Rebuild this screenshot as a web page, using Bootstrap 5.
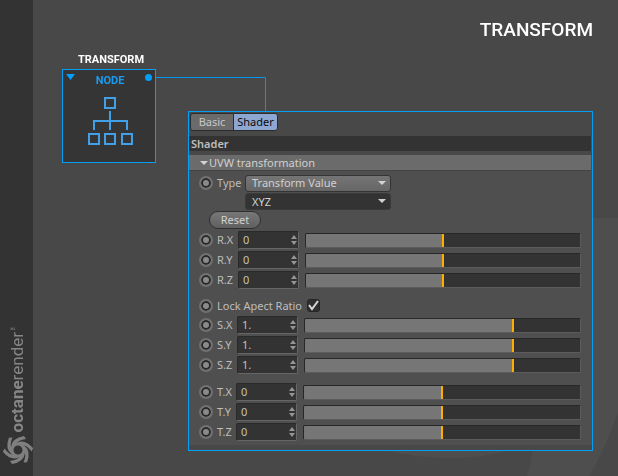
<!DOCTYPE html>
<html lang="en">
<head>
<meta charset="utf-8">
<meta name="viewport" content="width=device-width, initial-scale=1">
<title>Transform</title>
<link href="https://cdn.jsdelivr.net/npm/bootstrap@5.3.0/dist/css/bootstrap.min.css" rel="stylesheet">
<style>
body{background:#484848;font-family:"Noto Sans","Open Sans",sans-serif;font-size:11px;line-height:16px;color:#bdbdbd}
.brand-rail{width:33px;background:#333;color:#868686;padding-bottom:11px}
.brand-name{writing-mode:vertical-rl;transform:rotate(180deg);font:17px/20px Roboto,sans-serif;margin-bottom:3px}
.brand-name b{font-weight:700}
.brand-name span{font-size:10px;line-height:8px;vertical-align:4px}
.stage{padding:18px 25px 0 29px}
.backdrop{right:0;bottom:0;z-index:-1}
.page-title{font:500 19px/24px Roboto,sans-serif;color:#fff}
.graph{padding-top:11px}
.node-col{width:94px;margin-right:32px}
.node-title{font:700 11px/14px Roboto,sans-serif;color:#fff;padding-bottom:2px}
.node-box{border:1px solid #00a0fa;background:#353535;height:94px}
.node-head{height:18px;padding:0 3px;font:700 11px/18px Roboto,sans-serif;color:#1b9bf0}
.wire{left:94px;top:35px}
.panel{border:1px solid #00a0fa;margin-top:58px;background:#4f4f4f;min-width:0}
.tabs{background:#484848;padding:1px 1px 5px}
.tab{height:18px;padding:0;border:1px solid #2b2b2b;background:#6b6b6b;color:#c8c8c8;border-radius:3px 0 0 3px;line-height:16px;width:44px}
.tab.on{background:#8ea6d2;color:#0b0b0b;border-radius:0 3px 3px 0;width:45px;margin-left:-1px}
.sect{background:#333;height:15px;line-height:15px;font-weight:600;padding-left:2px;margin-right:1px}
.strip{background:#484848;height:4px}
.strip.foot{height:5px}
.group-head{background:#6b6b6b;height:16px;line-height:15px;border-bottom:1px solid #444;margin-right:1px;padding-left:11px;gap:1px;color:#d0d0d0}
.fields{padding:2px 11px 3px 10px}
.field-row{height:20px}
.field-row label{padding-left:4px;white-space:nowrap;flex:none}
.order-row{height:18px;padding-left:46px}
.key{width:14px;height:14px;flex:none;border:2px solid #707070;border-radius:50%;background:#8a8a8a;box-shadow:inset 0 0 0 2px #292929;padding:0}
.type-l{width:32px}
.pick{position:relative;width:146px}
.pick select{appearance:none;width:100%;height:17px;border:1px solid #343434;border-radius:3px;padding:0 6px;font:inherit;line-height:14px;color:#d0d0d0;background:linear-gradient(#757575,#666);display:block}
.pick.dark select{background:#333;border-color:#3a3a3a}
.pick svg{position:absolute;right:5px;top:6px;pointer-events:none}
.reset{display:block;width:52px;height:18px;border:1px solid #303030;border-radius:9px;background:linear-gradient(#777,#606060);color:#d0d0d0;padding:0;line-height:16px;margin:0 0 1px 10px}
.num{position:relative;width:61px;flex:none}
.num input{width:100%;height:18px;display:block;border:1px solid;border-color:#292929 #666 #666 #292929;border-radius:2px;background:#333;color:#c4c4b4;font:inherit;padding:0 4px 1px}
.num svg{position:absolute;right:2px;top:4px}
.slide{appearance:none;flex:1 1 0;min-width:0;height:15px;margin:0 0 0 6px;border:1px solid;border-color:#282828 #5c5c5c #5c5c5c #282828;border-radius:2px;background:linear-gradient(90deg,#767676 50%,#333 50%)}
.slide.high{background:linear-gradient(90deg,#767676 76%,#333 76%)}
.slide::-webkit-slider-thumb{appearance:none;width:2px;height:13px;background:#ffae00}
.rot label{width:25px}
.scl label{width:24px}
.trn label{width:23px}
.lock-row{height:19px;margin-top:6px}
.trn{margin-top:7px}
.lock-box{position:relative;margin-left:5px;width:13px;height:13px}
.lock-box input{appearance:none;display:block;width:13px;height:13px;margin:0;border:1px solid #252525;border-radius:3px;background:#303030}
.lock-box svg{position:absolute;left:0;top:0;pointer-events:none}
</style>
<script src="https://cdn.jsdelivr.net/npm/bootstrap@5.3.0/dist/js/bootstrap.bundle.min.js"></script>
</head>
<body>
<svg class="backdrop position-fixed" width="240" height="260" viewBox="378 216 240 260" fill="#4e4e4e" aria-hidden="true">
<path d="M593 218H618V412Q606 448 589 476H527Q532 464 532 440H593Z"/>
<path d="M378 449Q455 467 515 449V440H378Z"/>
</svg>
<svg width="0" height="0" class="position-absolute" aria-hidden="true">
<symbol id="spin" viewBox="0 0 6 10"><path d="M0 4L3 0L6 4ZM0 6H6L3 10Z" fill="#959595"/></symbol>
<symbol id="caret" viewBox="0 0 8 4"><path d="M0 0H8L4 4Z" fill="#d2d2d2"/></symbol>
</svg>
<div class="d-flex min-vh-100">
<aside class="brand-rail d-flex flex-column justify-content-end align-items-center flex-shrink-0">
<div class="brand-name"><b>octane</b>render<span>™</span></div>
<svg width="32" height="30" viewBox="-17 -15 32 30" fill="#7f7f7f" aria-hidden="true">
<circle r="6" fill="none" stroke="#7f7f7f" stroke-width="3"/>
<path id="blade" d="M-7 -3Q-6 -12 6 -14L8 -11Q0 -10 -2 -6Z"/>
<use href="#blade" transform="rotate(60)"/><use href="#blade" transform="rotate(120)"/><use href="#blade" transform="rotate(180)"/><use href="#blade" transform="rotate(240)"/><use href="#blade" transform="rotate(300)"/>
</svg>
</aside>
<main class="stage flex-grow-1">
<h1 class="page-title text-end m-0">TRANSFORM</h1>
<div class="graph d-flex align-items-start position-relative">
<svg class="wire position-absolute" width="112" height="34" fill="none" aria-hidden="true"><path d="M0 .5H109.500V34" stroke="#0098ee"/></svg>
<section class="node-col flex-shrink-0">
<h2 class="node-title text-center m-0 ps-1">TRANSFORM</h2>
<div class="node-box">
<div class="node-head d-flex justify-content-between align-items-center">
<svg class="mb-1" width="9" height="7"><path d="M0 0H9L4.500 6Z" fill="#00a0fa"/></svg><span class="pt-1">NODE</span>
<svg class="mb-1" width="7" height="7"><circle cx="3.500" cy="3.500" r="3.500" fill="#00a0fa"/></svg>
</div>
<svg class="d-block mx-auto mt-2" width="48" height="50" viewBox="0 0 48 50" fill="none" stroke="#42a0e8" stroke-width="2"><path d="M20 2h10v10H20zM4 38h10v10H4zM20 38h10v10H20zM37 38h10v10H37zM25 15v19M9 34V25H42V34"/></svg>
</div>
</section>
<section class="panel flex-grow-1">
<div class="tabs d-flex"><button type="button" class="tab">Basic</button><button type="button" class="tab on">Shader</button></div>
<div class="sect">Shader</div>
<div class="strip"></div>
<div class="group-head d-flex align-items-center"><svg width="8" height="4"><use href="#caret"/></svg>UVW transformation</div>
<form class="fields">
<div class="field-row d-flex align-items-center"><button type="button" class="key" aria-label="Animate type"></button><label class="type-l" for="type">Type</label><div class="pick"><select id="type"><option>Transform Value</option></select><svg width="8" height="4"><use href="#caret"/></svg></div></div>
<div class="order-row"><div class="pick dark"><select aria-label="Order"><option>XYZ</option></select><svg width="8" height="4"><use href="#caret"/></svg></div></div>
<button type="button" class="reset">Reset</button>
<div class="rot">
<div class="field-row d-flex align-items-center"><button type="button" class="key" aria-label="Animate R.X"></button><label for="rx">R.X</label><div class="num"><input id="rx" type="text" value="0"><svg width="6" height="10"><use href="#spin"/></svg></div><input class="slide" type="range" value="50" aria-label="R.X slider"></div>
<div class="field-row d-flex align-items-center"><button type="button" class="key" aria-label="Animate R.Y"></button><label for="ry">R.Y</label><div class="num"><input id="ry" type="text" value="0"><svg width="6" height="10"><use href="#spin"/></svg></div><input class="slide" type="range" value="50" aria-label="R.Y slider"></div>
<div class="field-row d-flex align-items-center"><button type="button" class="key" aria-label="Animate R.Z"></button><label for="rz">R.Z</label><div class="num"><input id="rz" type="text" value="0"><svg width="6" height="10"><use href="#spin"/></svg></div><input class="slide" type="range" value="50" aria-label="R.Z slider"></div>
</div>
<div class="field-row lock-row d-flex align-items-center"><button type="button" class="key" aria-label="Animate lock"></button><label for="lock">Lock Apect Ratio</label><div class="lock-box"><input id="lock" type="checkbox" checked><svg width="13" height="13" fill="none" stroke="#d8d8d8" stroke-width="2"><path d="M2 6L5 10L11 2"/></svg></div></div>
<div class="scl">
<div class="field-row d-flex align-items-center"><button type="button" class="key" aria-label="Animate S.X"></button><label for="sx">S.X</label><div class="num"><input id="sx" type="text" value="1."><svg width="6" height="10"><use href="#spin"/></svg></div><input class="slide high" type="range" value="76" aria-label="S.X slider"></div>
<div class="field-row d-flex align-items-center"><button type="button" class="key" aria-label="Animate S.Y"></button><label for="sy">S.Y</label><div class="num"><input id="sy" type="text" value="1."><svg width="6" height="10"><use href="#spin"/></svg></div><input class="slide high" type="range" value="76" aria-label="S.Y slider"></div>
<div class="field-row d-flex align-items-center"><button type="button" class="key" aria-label="Animate S.Z"></button><label for="sz">S.Z</label><div class="num"><input id="sz" type="text" value="1."><svg width="6" height="10"><use href="#spin"/></svg></div><input class="slide high" type="range" value="76" aria-label="S.Z slider"></div>
</div>
<div class="trn">
<div class="field-row d-flex align-items-center"><button type="button" class="key" aria-label="Animate T.X"></button><label for="tx">T.X</label><div class="num"><input id="tx" type="text" value="0"><svg width="6" height="10"><use href="#spin"/></svg></div><input class="slide" type="range" value="50" aria-label="T.X slider"></div>
<div class="field-row d-flex align-items-center"><button type="button" class="key" aria-label="Animate T.Y"></button><label for="ty">T.Y</label><div class="num"><input id="ty" type="text" value="0"><svg width="6" height="10"><use href="#spin"/></svg></div><input class="slide" type="range" value="50" aria-label="T.Y slider"></div>
<div class="field-row d-flex align-items-center"><button type="button" class="key" aria-label="Animate T.Z"></button><label for="tz">T.Z</label><div class="num"><input id="tz" type="text" value="0"><svg width="6" height="10"><use href="#spin"/></svg></div><input class="slide" type="range" value="50" aria-label="T.Z slider"></div>
</div>
</form>
<div class="strip foot"></div>
</section>
</div>
</main>
</div>
</body>
</html>
